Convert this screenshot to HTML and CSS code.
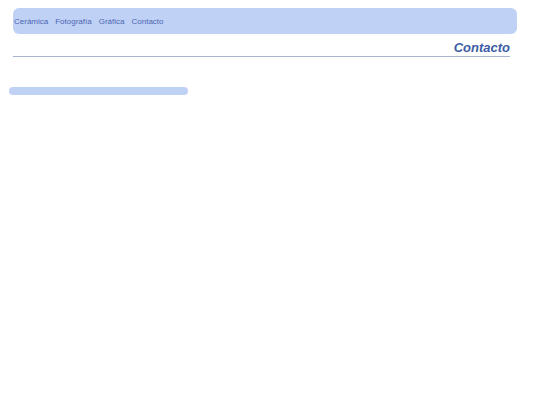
FILE: index.html
```html
<!DOCTYPE html>
<html lang="es">
<head>
<meta charset="utf-8">
<title>Contacto</title>
<link rel="stylesheet" href="styles.css">
</head>
<body>
<nav class="menu">
  <a href="#" class="menu-link">Cerámica</a>
  <a href="#" class="menu-link">Fotografía</a>
  <a href="#" class="menu-link">Gráfica</a>
  <a href="#" class="menu-link">Contacto</a>
</nav>
<h1 class="page-title">Contacto</h1>
<div class="bar"></div>
</body>
</html>
```
FILE: styles.css
```css
html, body {
  margin: 0;
  padding: 0;
  background: #ffffff;
}
body {
  font-family: "Liberation Sans", Arial, sans-serif;
  padding-top: 8px;
}
.menu {
  margin: 0 23px 0 13px;
  height: 26px;
  background: #bfd1f5;
  border-radius: 6px;
  display: flex;
  align-items: center;
  gap: 7px;
  padding-left: 1px;
  padding-top: 1px;
  box-sizing: border-box;
}
.menu-link {
  font-size: 8px;
  color: #4d66b2;
  text-decoration: none;
}
.page-title {
  margin: 5px 30px 0 13px;
  text-align: right;
  font-size: 13px;
  font-weight: bold;
  font-style: italic;
  color: #3d5ca5;
  line-height: 17px;
  padding-bottom: 0;
  border-bottom: 1px solid #a8b5cf;
}
.bar {
  margin: 30px 0 0 9px;
  width: 179px;
  height: 8px;
  border-radius: 4px;
  background: #bfd1f5;
}
```
